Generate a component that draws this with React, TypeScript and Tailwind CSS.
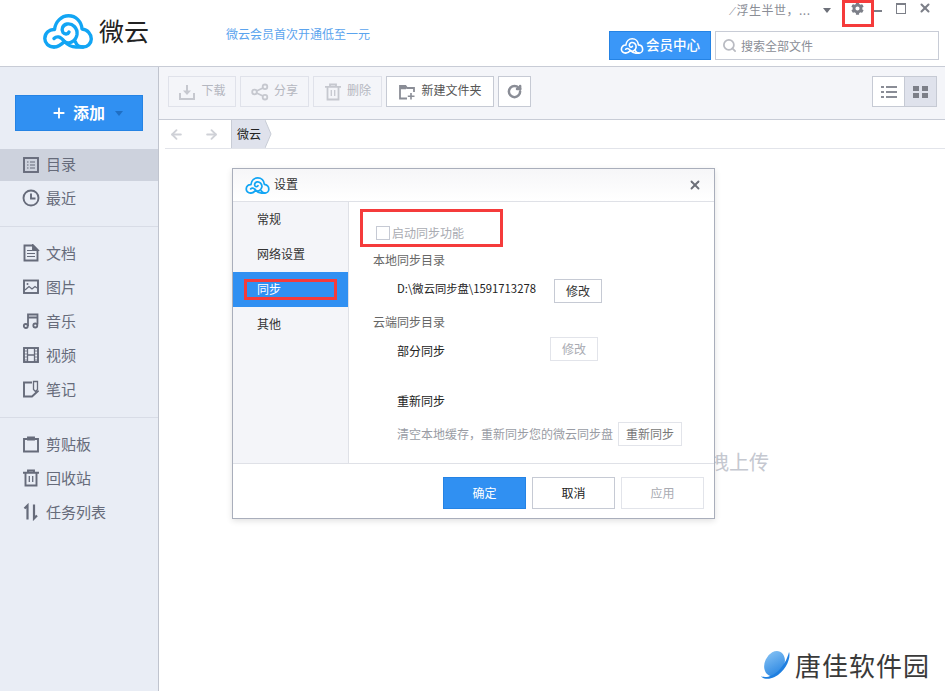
import type { ReactNode } from 'react';
import { ArrowLeft, ArrowRight, Plus, RotateCw, Search, X } from 'lucide-react';
import { FaCog } from 'react-icons/fa';

const FONT = { fontFamily: '"Noto Sans CJK SC", "Liberation Sans", sans-serif' };

function CloudLogo({ className, color = '#12a5f4', sw = 3.4 }: { className: string; color?: string; sw?: number }) {
    return (
        <svg viewBox="0 0 50 35" className={className} fill="none" stroke={color} strokeWidth={sw} strokeLinecap="round" strokeLinejoin="round">
            <path d="M11 33C5.500 33 1.800 29 1.800 24.500C1.800 19 6.500 15 11.500 15.500C12.500 7.500 18.500 1.800 25.500 1.800C33 1.800 38.500 7.500 39 15C44.500 15.500 48.300 20 48.300 25C48.300 29.500 44.500 33 40 33C36 33 33.500 31 32.500 28" />
            <path d="M11 33C16 33 19 30 21.500 27.500C25 31.500 29 33 33 33L40 33" />
            <path d="M11 24.500C13.500 22 17 21.800 21.500 27.500C26 31 33 27 34 20.500C34.800 14 29.500 9 24 10C19.500 11 18 15.500 20 18.500C21.500 20.500 25 20.500 26 18" />
        </svg>
    );
}

function SideIcon({ children }: { children: ReactNode }) {
    return (
        <svg viewBox="0 0 18 18" className="h-[18px] w-[18px] shrink-0" fill="none" stroke="#666b7a" strokeWidth="1.900">
            {children}
        </svg>
    );
}

const icons: Record<string, ReactNode> = {
    dir: (
        <>
            <rect x="2" y="2" width="14" height="14" />
            <path d="M5 6h1.500M5 9h1.500M5 12h1.500M8 6h5M8 9h5M8 12h5" strokeWidth="1.200" />
        </>
    ),
    recent: (
        <>
            <circle cx="9" cy="9" r="7.500" />
            <path d="M9 4.500V9.500H13.500" />
        </>
    ),
    doc: (
        <>
            <path d="M2.500 1.500H11L15.500 6V16.500H2.500Z" />
            <path d="M11 1.500L15.500 6H11Z" fill="#666b7a" />
            <path d="M5 6.500H10M5 9.500H13M5 12.500H13" strokeWidth="1.200" />
        </>
    ),
    pic: (
        <>
            <rect x="2" y="2.500" width="14" height="12.500" />
            <circle cx="5.500" cy="6" r="1" fill="#666b7a" stroke="none" />
            <path d="M3 12L7 8.500L10 11L13 8.500L15 10" strokeWidth="1.200" />
        </>
    ),
    music: (
        <>
            <path d="M6 14V2.500H15.500V12.500M6 5.500H15.500" strokeWidth="1.800" />
            <circle cx="3.800" cy="14" r="2" strokeWidth="1.800" />
            <circle cx="13.300" cy="13.500" r="2" strokeWidth="1.800" />
        </>
    ),
    video: (
        <>
            <rect x="2" y="2" width="14" height="14" />
            <path d="M5.500 2V16M12.500 2V16M5.500 9H12.500" strokeWidth="1.300" />
            <path d="M2 5H5M2 8H5M2 11H5M2 14H5M13 5H16M13 8H16M13 11H16M13 14H16" strokeWidth="0.800" />
        </>
    ),
    note: (
        <>
            <path d="M10 2.500H2V16.500H10L16 11V10.500" />
            <path d="M11.500 1.500H15.500V9.500L13.500 11.500L11.500 9.500Z" strokeWidth="1.300" />
        </>
    ),
    clip: (
        <>
            <path d="M5.500 4H2V16.500H16V4H12.500" />
            <path d="M6 4.500V2.500H12V4.500Z" fill="#666b7a" />
        </>
    ),
    bin: (
        <>
            <path d="M1 3.800H17M6 3.500V1.500H12V3.500M3.500 4V16.500H14.500V4" />
            <path d="M7.300 7V13M10.700 7V13" strokeWidth="1.300" />
        </>
    ),
    task: (
        <>
            <path d="M5.500 16.500V2.500L2.500 5.500" strokeWidth="2.200" />
            <path d="M12 1.500V15.500L15 12.500" strokeWidth="2.200" />
        </>
    ),
};

function SideItem({ icon, label, active }: { icon: string; label: string; active?: boolean }) {
    return (
        <div className={`flex items-center gap-[6px] pl-[22px] text-[15px] text-[#666b7a] ${active ? 'h-[32px] bg-[#cdd2dd]' : 'h-[34px]'}`}>
            <SideIcon>{icons[icon]}</SideIcon>
            <span className={active ? 'mb-[2px]' : ''}>{label}</span>
        </div>
    );
}

function ToolButton({ width, label, icon, dark }: { width: string; label?: string; icon: ReactNode; dark?: boolean }) {
    return (
        <div className={`flex h-[31px] items-center justify-center gap-[5px] border text-[12px] ${width} ${dark ? 'border-[#c6cad4] bg-white text-[#555]' : 'border-[#e0e2ea] text-[#b4b7c0]'}`}>
            {icon}
            {label && <span className="mb-[3px]">{label}</span>}
        </div>
    );
}

function DlgButton({ children, cls }: { children: ReactNode; cls: string }) {
    return <div className={`flex items-center justify-center border text-[12px] ${cls}`}>{children}</div>;
}

export default function App() {
    const navItems = ['常规', '网络设置', '同步', '其他'];

    return (
        <div style={FONT} className="relative flex h-[691px] w-[945px] flex-col overflow-hidden bg-white">
            {/* top bar */}
            <header className="flex h-[67px] shrink-0 border-b border-[#c8ccd6] bg-white">
                <div className="flex w-[226px] shrink-0 items-start pl-[43px] pt-[14px]">
                    <CloudLogo className="h-[35px] w-[50px]" />
                    <span className="ml-[6px] mt-[-2px] text-[25px] leading-[36px] text-[#222]">微云</span>
                </div>
                <div className="pt-[25px] text-[12px] leading-[17px] text-[#5ba4ee]">微云会员首次开通低至一元</div>
                <div className="ml-auto flex w-[336px] flex-col pr-[6px]">
                    <div className="flex h-[31px] items-start pt-[1px] text-[12px] text-[#8a8d96]">
                        <span className="ml-[120px] leading-[17px] tracking-[0.5px]"><span className="text-[10px]">⟋</span>浮生半世，...</span>
                        <span className="ml-[12px] mt-[7px] h-0 w-0 border-x-[4px] border-t-[5px] border-x-transparent border-t-[#6d7079]" />
                        <FaCog size={13} className="ml-[20px] mt-[1px] text-[#7c7f88]" />
                        <span className="ml-[9px] mt-[9px] h-[2px] w-[9px] bg-[#7c7f88]" />
                        <span className="ml-[14px] mt-[2px] h-[11px] w-[10px] border border-t-[2px] border-[#7c7f88]" />
                        <X size={14} strokeWidth={3.500} className="ml-[12px] text-[#7c7f88]" />
                    </div>
                    <div className="flex gap-[4px]">
                        <div className="flex h-[29px] w-[102px] items-center justify-center gap-[2px] border border-[#2583e4] bg-[#3a97f8] text-[13.500px] font-medium text-white">
                            <CloudLogo className="h-[16px] w-[24px]" color="#ffffff" sw={3.500} />
                            <span className="mb-[2px]">会员中心</span>
                        </div>
                        <div className="flex h-[29px] flex-1 items-center gap-[4px] border border-[#c8ccd6] pl-[6px] text-[12px] text-[#8a8d96]">
                            <Search size={15} strokeWidth={2.800} className="text-[#b9bbc2]" />
                            <span>搜索全部文件</span>
                        </div>
                    </div>
                </div>
            </header>

            <div className="flex min-h-0 flex-1">
                {/* sidebar */}
                <aside className="w-[159px] shrink-0 border-r border-[#c0c4ce] bg-[#e9edf5] pt-[28px]">
                    <div className="mx-[15px] flex h-[36px] w-[128px] items-center border border-[#2583e4] bg-[#3090f2] pl-[35px] text-[16px] font-bold text-white">
                        <Plus size={16} strokeWidth={2.800} />
                        <span className="mb-[2px] ml-[6px]">添加</span>
                        <span className="ml-[10px] h-0 w-0 border-x-[4px] border-t-[5px] border-x-transparent border-t-[#1f6fc4]" />
                    </div>
                    <div className="mt-[18px]">
                        <SideItem icon="dir" label="目录" active />
                        <SideItem icon="recent" label="最近" />
                    </div>
                    <div className="mt-[11px] border-t border-[#d8dce6] pt-[9px]">
                        <SideItem icon="doc" label="文档" />
                        <SideItem icon="pic" label="图片" />
                        <SideItem icon="music" label="音乐" />
                        <SideItem icon="video" label="视频" />
                        <SideItem icon="note" label="笔记" />
                    </div>
                    <div className="mt-[11px] border-t border-[#d8dce6] pt-[9px]">
                        <SideItem icon="clip" label="剪贴板" />
                        <SideItem icon="bin" label="回收站" />
                        <SideItem icon="task" label="任务列表" />
                    </div>
                </aside>

                {/* main */}
                <main className="flex min-w-0 flex-1 flex-col">
                    <div className="flex h-[53px] shrink-0 items-start gap-[4px] border-b border-[#c8ccd6] bg-[#f4f5f9] pl-[9px] pt-[9px]">
                        <ToolButton width="w-[68px]" label="下载" icon={
                            <svg viewBox="0 0 18 18" className="h-[18px] w-[18px]" fill="none" stroke="#c6c8cf" strokeWidth="2">
                                <path d="M2 10V16H16V10M9 2V11" />
                                <path d="M5 7.500L9 12L13 7.500Z" fill="#c6c8cf" stroke="none" />
                            </svg>
                        } />
                        <ToolButton width="w-[69px]" label="分享" icon={
                            <svg viewBox="0 0 18 18" className="h-[18px] w-[18px]" fill="none" stroke="#c6c8cf" strokeWidth="1.800">
                                <circle cx="3.500" cy="9" r="2.300" />
                                <circle cx="14" cy="3.800" r="2.300" />
                                <circle cx="14" cy="14.200" r="2.300" />
                                <path d="M5.500 8L12 5M5.500 10L12 13" />
                            </svg>
                        } />
                        <ToolButton width="w-[69px]" label="删除" icon={
                            <svg viewBox="0 0 18 18" className="h-[18px] w-[18px]" fill="none" stroke="#c6c8cf" strokeWidth="1.800">
                                <path d="M1 3.800H17M6 3.500V1.500H12V3.500M3.500 4V16.500H14.500V4" />
                                <path d="M7.300 7V13M10.700 7V13" strokeWidth="1.300" />
                            </svg>
                        } />
                        <ToolButton dark width="w-[108px]" label="新建文件夹" icon={
                            <svg viewBox="0 0 18 18" className="h-[18px] w-[18px]" fill="none" stroke="#8a8d96" strokeWidth="1.800">
                                <path d="M9 15.500H2V3H7.500L9 5H16V9" />
                                <path d="M2 5H8" strokeWidth="2.500" />
                                <path d="M13 10V16.500M9.800 13.300H16.500" strokeWidth="1.600" />
                            </svg>
                        } />
                        <ToolButton dark width="w-[33px]" icon={<RotateCw size={15} strokeWidth={4} className="text-[#8a8d96]" />} />
                        <div className="ml-auto mr-[8px] flex h-[31px] w-[65px] border border-[#c6cad4]">
                            <div className="flex w-[32px] items-center justify-center border-r border-[#c6cad4] bg-white">
                                <svg viewBox="0 0 16 12" className="h-[12px] w-[16px]" fill="#8a8d96">
                                    <path d="M0 0H3V2H0ZM5 0H16V2H5ZM0 5H3V7H0ZM5 5H16V7H5ZM0 10H3V12H0ZM5 10H16V12H5Z" />
                                </svg>
                            </div>
                            <div className="flex flex-1 items-center justify-center bg-[#dfe2ec]">
                                <svg viewBox="0 0 15 12" className="h-[12px] w-[15px]" fill="#7c7f88">
                                    <path d="M0 0H6V5H0ZM9 0H15V5H9ZM0 7H6V12H0ZM9 7H15V12H9Z" />
                                </svg>
                            </div>
                        </div>
                    </div>

                    <div className="ml-[6px] flex h-[29px] shrink-0 items-center border-b border-[#e2e4ea] pl-[3px]">
                        <ArrowLeft size={15} strokeWidth={3} className="ml-[1px] text-[#cfd1d7]" />
                        <ArrowRight size={15} strokeWidth={3} className="ml-[20px] text-[#cfd1d7]" />
                        <div className="relative ml-[12px] flex h-[28px] w-[34px] items-center justify-end border-l border-[#c8ccd6] bg-[#dfe2ec] text-[12px] text-[#222]">
                            <span className="absolute left-[5px]">微云</span>
                            <svg viewBox="0 0 7 28" className="absolute left-[33px] top-0 h-[28px] w-[7px]" fill="#dfe2ec" stroke="#c8ccd6">
                                <path d="M0 0L6 14L0 28" />
                            </svg>
                        </div>
                    </div>

                    <div className="flex flex-1 justify-end pr-[176px] pt-[300px] text-[20px] leading-[26px] text-[#c5c8d0]">
                        拖拽上传
                    </div>
                </main>
            </div>

            {/* settings dialog */}
            <div className="absolute left-[232px] top-[168px] flex h-[351px] w-[483px] flex-col border border-[#a9aebb] bg-white shadow-[0_2px_6px_rgba(0,0,0,0.12)]">
                <div className="flex h-[33px] shrink-0 items-center border-b border-[#dfe1e7] bg-gradient-to-b from-[#f6f6f8] to-white pl-[12px] pr-[12px] text-[12px] text-[#333]">
                    <CloudLogo className="h-[17px] w-[25px]" sw={3.600} />
                    <span className="mb-[2px] ml-[4px]">设置</span>
                    <X size={14} strokeWidth={3.200} className="ml-auto text-[#6d7079]" />
                </div>
                <div className="flex min-h-0 flex-1">
                    <div className="w-[116px] shrink-0 border-r border-[#dfe1e7] bg-[#f4f5f9] text-[12px] text-[#333]">
                        {navItems.map((item) => (
                            <div key={item} className={`flex h-[35px] items-center pb-[2px] pl-[24px] ${item === '同步' ? 'bg-[#3090f2] text-white' : ''}`}>
                                {item}
                            </div>
                        ))}
                    </div>
                    <div className="flex-1 pl-[24px] text-[12px] leading-[20px] text-[#666]">
                        <div className="ml-[3px] mt-[24px] flex h-[14px] items-center gap-[2px] text-[#a9abb2]">
                            <span className="h-[14px] w-[14px] border border-[#c6cad4] bg-white" />
                            <span>启动同步功能</span>
                        </div>
                        <div className="mt-[10px] h-[20px]">本地同步目录</div>
                        <div className="mt-[9px] flex h-[24px] items-center pl-[24px] text-[#222]">
                            <span className="mb-[7px] w-[157px] text-[11.300px]">D:\微云同步盘\1591713278</span>
                            <DlgButton cls="h-[24px] w-[48px] border-[#c6cad4] text-[#333]">修改</DlgButton>
                        </div>
                        <div className="mt-[9px] h-[20px]">云端同步目录</div>
                        <div className="mt-[5px] flex h-[24px] items-center pl-[24px] text-[#222]">
                            <span className="mt-[3px] w-[153px]">部分同步</span>
                            <DlgButton cls="h-[24px] w-[48px] border-[#e2e4ea] text-[#a9abb2]">修改</DlgButton>
                        </div>
                        <div className="mt-[30px] h-[20px] pl-[24px] text-[#222]">重新同步</div>
                        <div className="mt-[11px] flex h-[24px] items-center pl-[24px] text-[#999ca4]">
                            <span className="w-[221px]">清空本地缓存，重新同步您的微云同步盘</span>
                            <DlgButton cls="h-[24px] w-[64px] border-[#e2e4ea] text-[#777]">重新同步</DlgButton>
                        </div>
                    </div>
                </div>
                <div className="flex h-[55px] shrink-0 justify-end gap-[6px] border-t border-[#dfe1e7] pr-[10px] pt-[13px]">
                    <DlgButton cls="h-[32px] w-[83px] border-[#2583e4] bg-[#3090f2] text-white">确定</DlgButton>
                    <DlgButton cls="h-[32px] w-[83px] border-[#c6cad4] text-[#222]">取消</DlgButton>
                    <DlgButton cls="h-[32px] w-[83px] border-[#e2e4ea] text-[#a9abb2]">应用</DlgButton>
                </div>
            </div>

            {/* red annotation boxes */}
            <div className="absolute left-[842px] top-0 h-[27px] w-[32px] border-[3px] border-[#f53b3b]" />
            <div className="absolute left-[360px] top-[209px] h-[38px] w-[143px] border-[3px] border-[#f53b3b]" />
            <div className="absolute left-[244px] top-[279px] h-[21px] w-[93px] border-[3px] border-[#f53b3b]" />

            {/* watermark */}
            <div className="absolute left-[760px] top-[649px] flex items-center">
                <svg viewBox="0 0 32 32" className="h-[31px] w-[31px]">
                    <defs>
                        <linearGradient id="ball" x1="0" y1="0" x2="1" y2="1">
                            <stop offset="0" stopColor="#8cc6f5" />
                            <stop offset="1" stopColor="#1f7fe0" />
                        </linearGradient>
                    </defs>
                    <ellipse cx="15" cy="15" rx="10" ry="13.500" transform="rotate(25 15 15)" fill="url(#ball)" />
                    <path d="M1 28C10 32 25 22 30 3C32 9 27 23 15 29C9 32 3 31 1 28Z" fill="#1f7fe0" />
                </svg>
                <span className="ml-[4px] text-[26px] leading-[30px] tracking-[1px] text-[#3a3a3a]">唐佳软件园</span>
            </div>
        </div>
    );
}
